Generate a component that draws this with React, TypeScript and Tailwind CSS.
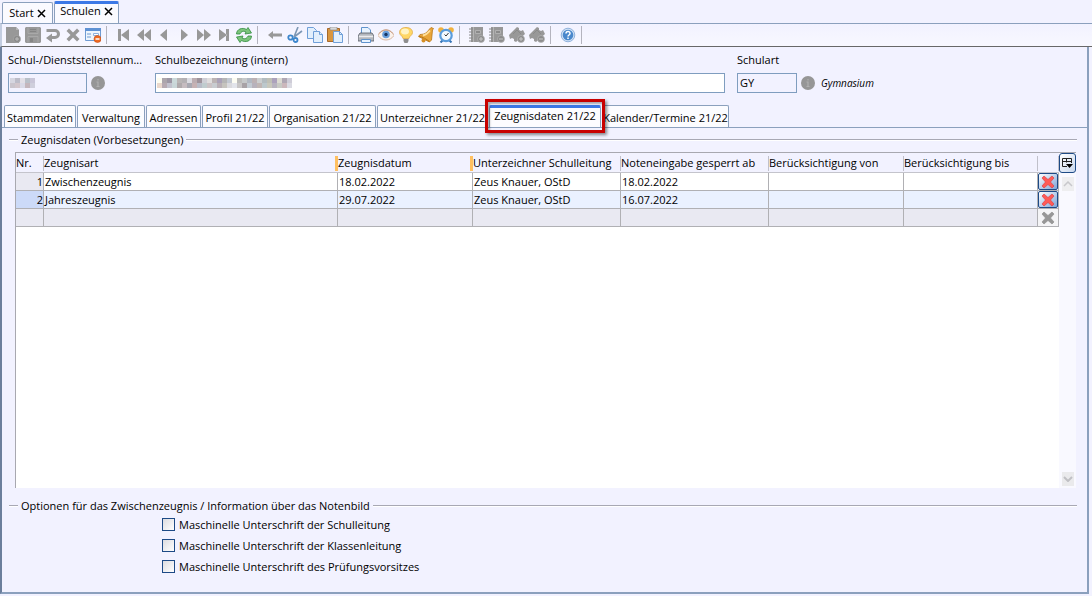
import { useState } from 'react'
import type { ReactNode } from 'react'
import clsx from 'clsx'

interface Zeugnis {
  nr: number
  art: string
  datum: string
  unterzeichner: string
  gesperrtAb: string
}

const zeugnisse: Zeugnis[] = [
  { nr: 1, art: 'Zwischenzeugnis', datum: '18.02.2022', unterzeichner: 'Zeus Knauer, OStD', gesperrtAb: '18.02.2022' },
  { nr: 2, art: 'Jahreszeugnis', datum: '29.07.2022', unterzeichner: 'Zeus Knauer, OStD', gesperrtAb: '16.07.2022' },
]

const tabs = [
  { label: 'Stammdaten', width: 'w-[72px]' },
  { label: 'Verwaltung', width: 'w-[68px]' },
  { label: 'Adressen', width: 'w-[55px]' },
  { label: 'Profil 21/22', width: 'w-[66px]' },
  { label: 'Organisation 21/22', width: 'w-[107px]' },
  { label: 'Unterzeichner 21/22', width: 'w-[111px]' },
  { label: 'Zeugnisdaten 21/22', width: 'w-[112px]' },
  { label: 'Kalender/Termine 21/22', width: 'w-[127px]' },
]

const columns = [
  { label: 'Nr.', width: 'w-[28px]' },
  { label: 'Zeugnisart', width: '', required: true },
  { label: 'Zeugnisdatum', width: 'w-[135px]', required: true },
  { label: 'Unterzeichner Schulleitung', width: 'w-[148px]' },
  { label: 'Noteneingabe gesperrt ab', width: 'w-[148px]' },
  { label: 'Berücksichtigung von', width: 'w-[135px]' },
  { label: 'Berücksichtigung bis', width: 'w-[134px]' },
  { label: '', width: 'w-[21px]' },
]

const options = [
  'Maschinelle Unterschrift der Schulleitung',
  'Maschinelle Unterschrift der Klassenleitung',
  'Maschinelle Unterschrift des Prüfungsvorsitzes',
]

const GRAY = '#989898'

/* ---------- toolbar drawings, all on a 16 x 16 grid ---------- */

const notebook = (
  <>
    <path d="M2 0h12v15H2z" fill={GRAY} />
    <path d="M0 2h4M0 5h4M0 8h4M0 11h4M0 14h4" stroke="#8a8a8a" />
    <path d="M4.500 0v15" stroke="#b4b4b4" />
    <path d="M6.500 3.500h5v3h-5z" fill="#8a8a8a" stroke="#b0b0b0" />
    <circle cx="12" cy="12" r="3.500" fill="#8c8c8c" stroke="#b4b4b4" strokeWidth=".7" />
  </>
)

const ticket = (
  <>
    <path d="M0 8 8 0l2 1v2l2 1 2-1 2 4-9 8-2-1v-2l-2-1-2 1z" fill={GRAY} />
    <path d="m4 7 4-4 4 4" fill="none" stroke="#8a8a8a" />
    <circle cx="12" cy="12" r="3.500" fill="#8c8c8c" stroke="#b4b4b4" strokeWidth=".7" />
  </>
)

const icons: Record<string, ReactNode> = {
  Neu: (
    <>
      <path d="M1 0h10l3 3v13H1z" fill={GRAY} />
      <path d="M11 0v3h3" fill="#b5b5b5" />
      <circle cx="12" cy="12" r="3.600" fill="#8a8a8a" stroke="#aaa" strokeWidth=".6" />
      <path d="M10 12h4M12 10v4" stroke="#bdbdbd" />
    </>
  ),
  Speichern: (
    <>
      <path d="M0 1 1 0h14l1 1v14l-1 1H1l-1-1z" fill={GRAY} />
      <path d="M3 .5v6h10v-6M3 15.500v-6h10v6" fill="none" stroke="#b0b0b0" strokeWidth=".7" />
      <path d="M5 2.500h6M5 4.500h6" stroke="#858585" />
      <path d="M5 11h3v4H5z" fill="#858585" />
    </>
  ),
  Rückgängig: (
    <path d="M1.500 2H10a5 5 0 0 1 0 10H7v3.500L1 11l6-4.500V9h3a2 2 0 0 0 0-4H1.500z" fill={GRAY} />
  ),
  Löschen: (
    <path d="m1.500 4 2.500-2.500L8 5.500l4-4L14.500 4l-4 4 4 4-2.500 2.500-4-4-4 4L1.500 12l4-4z" fill={GRAY} />
  ),
  Formular: (
    <>
      <path d="M.5 1.500h15v12H.5z" fill="#eef5fd" stroke="#6f9bd2" />
      <path d="M0 1h16v3H0z" fill="#5f92d4" />
      <path d="M2 7h4M2 10h4" stroke="#6f9bd2" />
      <path d="M8.500 6.500h5v2h-5z" fill="#fff" stroke="#8cb0dd" />
      <circle cx="12.500" cy="12" r="3.500" fill="#ee6a22" stroke="#c94c10" strokeWidth=".6" />
      <path d="M10.500 12h4" stroke="#fff" strokeWidth="1.500" />
    </>
  ),
  Erster: <path d="M2 2h3v12H2zM13 2v12L5 8z" fill={GRAY} />,
  'Zurück blättern': <path d="M8 2v12L1 8zM15 2v12L8 8z" fill={GRAY} />,
  Vorheriger: <path d="M11 2v12L4 8z" fill={GRAY} />,
  Nächster: <path d="M5 2v12l7-6z" fill={GRAY} />,
  'Vor blättern': <path d="M1 2v12l7-6zM8 2v12l7-6z" fill={GRAY} />,
  Letzter: <path d="M3 2v12l8-6zM10 2h3v12h-3z" fill={GRAY} />,
  Aktualisieren: (
    <g fill="#7cc47c" stroke="#2f8b3c" strokeWidth=".8">
      <path d="M.5 7c0-5 6-7 10-4.500L12 .5 15.500 6 9 7l1-2C7.500 3.500 5 4.500 4 7z" />
      <path d="M15.500 9c0 5-6 7-10 4.500L4 15.500.5 10 7 9l-1 2c2.500 1.500 5 .5 6-2z" />
    </g>
  ),
  Zurück: <path d="M1 8l5-4v2.500h9v3H6V12z" fill={GRAY} />,
  Ausschneiden: (
    <>
      <path d="M7 10 11 0M7 10l8-6" stroke="#7d97b5" strokeWidth="1.600" />
      <circle cx="3.500" cy="10.500" r="2.200" fill="none" stroke="#3c86cc" strokeWidth="1.800" />
      <circle cx="8.500" cy="13" r="2" fill="none" stroke="#3c86cc" strokeWidth="1.800" />
    </>
  ),
  Kopieren: (
    <g fill="#e2effc" stroke="#6f9fd8">
      <path d="M.5.5h6l3 3v8h-9z" />
      <path d="M6.500 4.500h6l3 3v8h-9z" />
      <path d="M12.500 4.500v3h3" />
    </g>
  ),
  Einfügen: (
    <>
      <path d="M.5 1.500h12v13H.5z" fill="#d9963e" stroke="#a8692a" />
      <path d="M3 0h7v3H3z" fill="#dadada" stroke="#888" strokeWidth=".6" />
      <path d="M6.500 4.500h6l3 3v8h-9z" fill="#e2effc" stroke="#6f9fd8" />
      <path d="M12.500 4.500v3h3" fill="none" stroke="#6f9fd8" />
    </>
  ),
  Drucken: (
    <>
      <path d="M3.500 7V.5H10L12.500 3v4" fill="#e8f3ff" stroke="#5f93cc" />
      <path d="M2 6h12l2 3v5H0V9z" fill="#b4b8be" stroke="#555b64" strokeWidth=".8" />
      <path d="M1 9.500h14" stroke="#ececef" strokeWidth="1.500" />
      <path d="M3.500 12.500h9v3h-9z" fill="#e8f3ff" stroke="#5f93cc" />
    </>
  ),
  Ansicht: (
    <>
      <path d="M0 8.500c3-7 13-7 16 0-4 6-12 6-16 0z" fill="#faf2ec" stroke="#d8b8a4" />
      <circle cx="8" cy="7.500" r="3.800" fill="#6a9fdc" />
      <circle cx="8" cy="7.500" r="1.700" fill="#173562" />
      <path d="M1 6.500c4-5 10-5 14 0" fill="none" stroke="#c99a7c" />
    </>
  ),
  Hinweis: (
    <>
      <path d="M8 .5c4 0 6.500 2 6.500 5S11 9 11 11.500H5C5 9 1.500 8.500 1.500 5.500S4 .5 8 .5z" fill="#ffd766" stroke="#e0a946" strokeWidth=".8" />
      <ellipse cx="7" cy="4.500" rx="4" ry="3" fill="#fff3c4" />
      <path d="M5.500 12h5v2l-1 2h-3l-1-2z" fill="#8e8e8e" />
    </>
  ),
  Erinnerung: (
    <>
      <path d="m13 .5 2.500 1-1 1.500-1 10-2 2L.5 9.500 2 7.500c5 0 7-2 9.500-5.500z" fill="#e9a63a" stroke="#b97718" strokeWidth=".8" />
      <path d="M5 8.500c3-.5 5-2.500 7-5" fill="none" stroke="#ffe09a" strokeWidth="1.800" />
      <path d="M1 9.500c3 0 8 3 10.500 5" stroke="#b97718" fill="none" />
      <circle cx="5.500" cy="13.500" r="2" fill="#d58f25" />
    </>
  ),
  Wecker: (
    <>
      <circle cx="3" cy="3" r="2.800" fill="#f1b23e" />
      <circle cx="13" cy="3" r="2.800" fill="#f1b23e" />
      <path d="m2.500 15.500 2-2M13.500 15.500l-2-2" stroke="#3673b4" strokeWidth="2" />
      <circle cx="8" cy="8.500" r="5.700" fill="#f3f9ff" stroke="#5a9cdc" strokeWidth="2.200" />
      <path d="M10.500 6 8 9 6.500 7.500" fill="none" stroke="#333" />
    </>
  ),
  'Eintrag hinzufügen': <>{notebook}<path d="M10 12h4M12 10v4" stroke="#c8c8c8" /></>,
  'Eintrag entfernen': <>{notebook}<path d="M10 12h4" stroke="#c8c8c8" /></>,
  'Marke hinzufügen': <>{ticket}<path d="M10 12h4M12 10v4" stroke="#c8c8c8" /></>,
  'Marke entfernen': <>{ticket}<path d="M10 12h4" stroke="#c8c8c8" /></>,
  Hilfe: (
    <>
      <circle cx="8" cy="8" r="6.800" fill="#cfe0f4" stroke="#7ba3d4" strokeWidth=".8" />
      <circle cx="8" cy="8" r="5.300" fill="#4a88cc" />
      <path d="M6 6.500c0-3 4.200-2.500 4 0C10 8 8 8 8 9.500M8 10.500V12" fill="none" stroke="#fff" strokeWidth="1.500" />
    </>
  ),
}

const toolbar = [
  ['Neu', 'Speichern', 'Rückgängig', 'Löschen', 'Formular'],
  ['Erster', 'Zurück blättern', 'Vorheriger', 'Nächster', 'Vor blättern', 'Letzter', 'Aktualisieren'],
  ['Zurück', 'Ausschneiden', 'Kopieren', 'Einfügen'],
  ['Drucken', 'Ansicht', 'Hinweis', 'Erinnerung', 'Wecker'],
  ['Eintrag hinzufügen', 'Eintrag entfernen', 'Marke hinzufügen', 'Marke entfernen'],
  ['Hilfe'],
]

function Toolbar() {
  return (
    <div
      role="toolbar"
      className="flex h-6 items-center border-t border-b border-l-2 border-t-[#8ba0bd] border-b-[#686868] border-l-[#c3cde0] bg-gradient-to-b from-[#f2f2ff] to-[#f8f8ff] pl-px"
    >
      {toolbar.map((group, i) => (
        <div key={i} className="flex items-center">
          {group.map(name => (
            <button key={name} type="button" aria-label={name} className="flex h-5 w-5 items-center justify-center">
              <svg viewBox="0 0 16 16" className="h-4 w-4" fill="none">{icons[name]}</svg>
            </button>
          ))}
          <span className="mr-[7px] ml-[3px] h-[18px] w-px bg-[#b4b4be]" />
        </div>
      ))}
    </div>
  )
}

function CloseMark() {
  return (
    <svg viewBox="0 0 9 9" className="h-[9px] w-[9px]">
      <path d="m1 1 7 7M8 1 1 8" stroke="#000" strokeWidth="1.500" />
    </svg>
  )
}

function InfoDot() {
  return (
    <svg viewBox="0 0 14 14" className="h-[14px] w-[14px] shrink-0">
      <circle cx="7" cy="7" r="7" fill="#969696" />
      <path d="M7 3v1.500M5.500 6H7v4M5.500 10.500h3" fill="none" stroke="#b0b0b0" strokeWidth="1.200" />
    </svg>
  )
}

/* Pixelated stand-ins for values that are kept private, one list per row */
const nummerCells = [
  ['#d6d6e0', '#bcbcc8', '#e2dfe6', '#b9c0c9', '#c9c6d8'],
  ['#c9c4cc', '#d2c6cc', '#d9d9e6', '#c4b6bc', '#cfcfdc'],
]

const bezeichnungCells = [
  ['#fdfdf0', '#aca6ac', '#9d97a4', '#cbd9da', '#bab6b6', '#b4b1b4', '#dcdce2', '#bcaeb2', '#9f949c', '#cfcfd6', '#e0dede', '#bcb4b4', '#aaa2b8', '#b6b6b6', '#c3c9d2', '#fdfdf2', '#bcbcba', '#c6c9ca', '#b2b8c2', '#bdb2b4', '#cccfd0', '#b3bcc0', '#bfc0b6', '#aca2bc', '#dcdbd2', '#b0a8b4', '#cfcdd8'],
  ['#ead8cc', '#b6aab2', '#c2c2ce', '#c9d6d8', '#b0aaac', '#c6bcc0', '#a9a9b2', '#c6b2b4', '#b8bcc8', '#c0ccce', '#ccc4c6', '#c8ccd0', '#b9b0b6', '#c6c4be', '#dadade', '#e2e4ea', '#c8c6c6', '#a8a2a6', '#c2cad2', '#b7b2bc', '#c0b6b4', '#bcc8cc', '#c8c8bc', '#b8b4c0', '#c8cac4', '#ccb8bc', '#dadae2'],
]

function Mosaic({ rows }: { rows: string[][] }) {
  return (
    <svg width={rows[0].length * 5} height={10} className="pointer-events-none absolute top-[5px] left-[2px]" aria-hidden="true">
      {rows.map((row, y) =>
        row.map((fill, x) => <rect key={`${x}-${y}`} x={x * 5} y={y * 5} width={5} height={5} fill={fill} />),
      )}
    </svg>
  )
}

function GroupTitle({ children }: { children: ReactNode }) {
  return (
    <div className="flex h-4 items-center gap-[3px] pr-[6px] pl-[2px]">
      <span className="h-[2px] w-[9px] border-t border-[#a8a8b4] bg-white" />
      <h2 className="leading-4 whitespace-nowrap">{children}</h2>
      <span className="h-[2px] flex-1 border-t border-[#a8a8b4] bg-white" />
    </div>
  )
}

function DeleteButton({ disabled = false }: { disabled?: boolean }) {
  return (
    <button
      type="button"
      aria-label="Zeile löschen"
      disabled={disabled}
      className={clsx(
        'flex h-[17px] w-full items-center justify-center',
        disabled ? 'bg-[#f4f4f6]' : 'rounded-[2px] border border-[#1d4a86] bg-gradient-to-br from-white to-[#7fa4d6]',
      )}
    >
      <svg viewBox="0 0 14 14" className="h-[14px] w-[14px] shrink-0">
        <path
          d="m1 3 2-2 4 3.500L11 1l2 2-3.500 4 3.500 4-2 2-4-3.500L3 13l-2-2 3.500-4z"
          fill={disabled ? '#979797' : '#ff5a56'}
          stroke={disabled ? '#8c8c8c' : '#dd3538'}
          strokeWidth=".6"
        />
      </svg>
    </button>
  )
}

function ZeugnisTable() {
  const cell = 'h-[18px] border-r border-b border-[#b0b0b4] p-0 pl-px leading-[17px] whitespace-nowrap'

  return (
    <div className="mr-[11px] ml-[13px] flex min-h-[336px] flex-1 border-t border-l border-[#a8a8b0] bg-white">
      <div className="min-w-0 flex-1">
        <table className="w-full table-fixed border-separate border-spacing-0">
          <thead>
            <tr className="bg-[#f2f2ff]">
              {columns.map(col => (
                <th key={col.label} className={clsx('h-[20px] border-b border-[#c4c4cc] p-0 pt-[2px] font-normal', col.width)}>
                  <div
                    className={clsx(
                      'flex h-[15px] items-center text-left whitespace-nowrap',
                      col.required ? 'border-r-[3px] border-[#ffc061]' : 'border-r border-[#c0c0ca]',
                    )}
                  >
                    {col.label}
                  </div>
                </th>
              ))}
            </tr>
          </thead>
          <tbody>
            {zeugnisse.map((z, i) => {
              const selected = i === 1
              return (
                <tr key={z.nr} className={selected ? 'bg-[#eaf1ff]' : 'bg-white'}>
                  <td className={clsx(cell, 'text-right', selected ? 'bg-[#ccdaf8]' : 'bg-[#e9e9f2]')}>{z.nr}</td>
                  <td className={cell}>{z.art}</td>
                  <td className={cell}>{z.datum}</td>
                  <td className={cell}>{z.unterzeichner}</td>
                  <td className={cell}>{z.gesperrtAb}</td>
                  <td className={cell} />
                  <td className={cell} />
                  <td className="h-[18px] border-r border-b border-[#b0b0b4] p-0"><DeleteButton /></td>
                </tr>
              )
            })}
            <tr className="bg-[#e9e9f2]">
              {columns.slice(0, 7).map(col => <td key={col.label} className={cell} />)}
              <td className="h-[18px] border-r border-b border-[#b0b0b4] p-0"><DeleteButton disabled /></td>
            </tr>
          </tbody>
        </table>
      </div>

      {/* Column chooser and scroll bar */}
      <div className="flex w-[17px] flex-col items-center bg-[#f9f9ff]">
        <button
          type="button"
          aria-label="Spalten auswählen"
          className="flex h-[20px] w-[17px] items-center justify-center rounded-[3px] border border-[#1d4a86] bg-gradient-to-br from-white to-[#c9d8ee]"
        >
          <svg viewBox="0 0 11 11" className="h-[11px] w-[11px] shrink-0" fill="none">
            <path d="M.5 8.500v-8h9V5M.5 3.500h9M4.500.5v4M.5 8.500H5" stroke="#222" />
            <path d="M4 6h7l-3.500 4z" fill="#000" />
          </svg>
        </button>
        <button type="button" aria-label="Nach oben" className="mt-[4px] flex h-[14px] w-[12px] items-center justify-center bg-[#eeeef0]">
          <svg viewBox="0 0 10 6" className="h-[6px] w-[10px]"><path d="m1 5 4-4 4 4" fill="none" stroke="#c8c8cc" strokeWidth="1.500" /></svg>
        </button>
        <button type="button" aria-label="Nach unten" className="mt-auto mb-[2px] flex h-[14px] w-[12px] items-center justify-center bg-[#eaeaec]">
          <svg viewBox="0 0 10 6" className="h-[6px] w-[10px]"><path d="m1 1 4 4 4-4" fill="none" stroke="#c0c0c4" strokeWidth="2" /></svg>
        </button>
      </div>
    </div>
  )
}

export default function App() {
  const [activeTab, setActiveTab] = useState('Zeugnisdaten 21/22')

  return (
    <div className="flex min-h-screen flex-col bg-[#f2f2ff] font-['Open_Sans','Noto_Sans',sans-serif] text-[11px] text-black">
      {/* Window tabs */}
      <div className="flex h-[23px] items-end gap-px pl-[2px]">
        <button type="button" className="flex h-[21px] w-[51px] items-center justify-center gap-[3px] rounded-t-[2px] border border-b-0 border-[#8ba0bd] bg-[#fafaff]">
          Start <CloseMark />
        </button>
        <button type="button" className="flex h-[22px] w-[65px] items-center justify-center gap-[3px] rounded-t-[2px] border border-t-[3px] border-b-0 border-[#8ba0bd] border-t-[#3c78e6] bg-[#fafaff] pb-[5px]">
          Schulen <CloseMark />
        </button>
      </div>

      <div className="flex flex-1 flex-col">
        <Toolbar />

        <div className="mr-[3px] mb-[3px] flex flex-1 flex-col border-r-2 border-b-2 border-l-2 border-[#8ba0bd] border-l-[#6c7f9c]">
          {/* School data */}
          <div className="flex px-[6px] pt-[5px]">
            <div className="w-[147px]">
              <label htmlFor="nummer" className="block h-[21px] leading-4 whitespace-nowrap">Schul-/Dienststellennum...</label>
              <div className="flex h-5 items-center gap-1">
                <div className="relative">
                  <input id="nummer" className="block h-5 w-[79px] border border-[#7f9dbf] bg-[#f2f2ff] px-[3px]" />
                  <Mosaic rows={nummerCells} />
                </div>
                <InfoDot />
              </div>
            </div>
            <div className="mr-[12px] max-w-[570px] flex-1">
              <label htmlFor="bezeichnung" className="block h-[21px] leading-4">Schulbezeichnung (intern)</label>
              <div className="relative">
                <input id="bezeichnung" className="block h-5 w-full border border-[#7f9dbf] bg-white px-[3px]" />
                <Mosaic rows={bezeichnungCells} />
              </div>
            </div>
            <div>
              <label htmlFor="schulart" className="block h-[21px] leading-4">Schulart</label>
              <div className="flex h-5 items-center gap-1">
                <input id="schulart" defaultValue="GY" className="block h-5 w-[60px] border border-[#7f9dbf] bg-[#f2f2ff] px-[2px] pb-px" />
                <InfoDot />
                <span className="pl-[2px] text-[10px] italic">Gymnasium</span>
              </div>
            </div>
          </div>

          {/* Section tabs */}
          <div role="tablist" className="mt-3 flex h-[23px] items-end gap-px border-b border-[#8ba0bd] pl-[2px]">
            {tabs.map(tab => {
              const active = tab.label === activeTab
              return (
                <button
                  key={tab.label}
                  type="button"
                  role="tab"
                  aria-selected={active}
                  onClick={() => setActiveTab(tab.label)}
                  className={clsx(
                    'relative flex h-[22px] shrink-0 items-center justify-center rounded-t-[2px] border border-b-0 border-[#8ba0bd] bg-[#fcfcff] whitespace-nowrap',
                    tab.width,
                    active ? 'z-10 border-t-[3px] border-t-[#3c78e6] pb-[2px]' : 'pt-1',
                  )}
                >
                  {tab.label}
                  {active && (
                    <span className="pointer-events-none absolute -inset-x-[5px] -top-[9px] -bottom-[6px] border-[3px] border-[#c80000] shadow-[2px_2px_3px_rgba(0,0,0,0.45),inset_2px_2px_2px_rgba(0,0,0,0.3)]" />
                  )}
                </button>
              )
            })}
          </div>

          <section className="flex flex-1 flex-col pt-1" role="tabpanel">
            <div className="mr-1 ml-[5px]">
              <GroupTitle>Zeugnisdaten (Vorbesetzungen)</GroupTitle>
            </div>
            <div className="mt-1 flex flex-1 flex-col">
              <ZeugnisTable />
            </div>
            <div className="mt-[10px] mr-1 ml-[5px]">
              <GroupTitle>Optionen für das Zwischenzeugnis / Information über das Notenbild</GroupTitle>
            </div>
            <div className="mb-[15px] pl-[160px]">
              {options.map(option => (
                <label key={option} className="flex h-[21px] items-center gap-1">
                  <input
                    type="checkbox"
                    className="h-[13px] w-[13px] appearance-none border border-[#1d4a86] bg-gradient-to-br from-[#dcdce0] to-white checked:to-[#1d4a86]"
                  />
                  <span className="pt-px">{option}</span>
                </label>
              ))}
            </div>
          </section>
        </div>
      </div>
    </div>
  )
}
